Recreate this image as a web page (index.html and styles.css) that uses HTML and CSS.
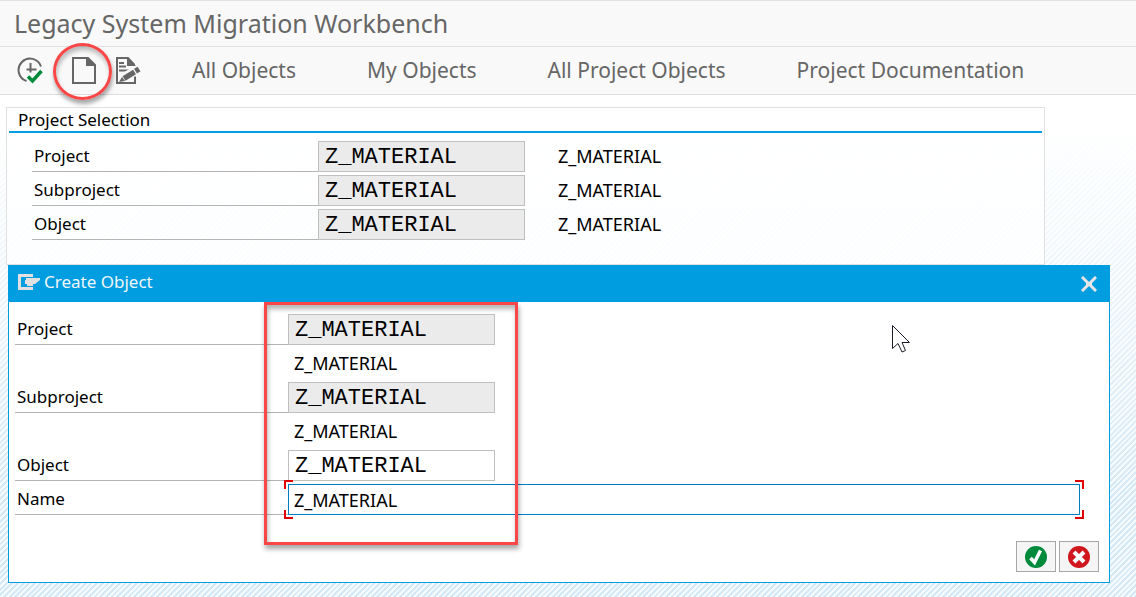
FILE: index.html
```html
<!DOCTYPE html>
<html lang="en">
<head>
<meta charset="utf-8">
<meta name="viewport" content="width=device-width, initial-scale=1">
<title>Legacy System Migration Workbench</title>
<link rel="stylesheet" href="styles.css">
</head>
<body>
<header class="titlebar"><h1>Legacy System Migration Workbench</h1></header>
<nav class="toolbar" aria-label="Application toolbar">
  <div class="tools">
    <button type="button" class="tool" aria-label="Execute">
      <svg width="28" height="28" viewBox="0 0 28 28" fill="none"><path d="M10.500 24A11.500 11.500 0 1 1 25 9.500" stroke="#666" stroke-width="2"/><path d="M14.500 6v9.500M10.500 12.500h10" stroke="#666" stroke-width="2"/><path d="M12 19.500l4.500 4.500 9-10" stroke="#008a3b" stroke-width="3.500"/></svg>
    </button>
    <button type="button" class="tool tool-create" aria-label="Create">
      <svg width="28" height="28" viewBox="0 0 28 28"><path d="M3 1h15l7 7v18H3z" fill="#f9f9f9" stroke="#666" stroke-width="2"/><path d="M16 1h2l8 8h-10z" fill="#666"/></svg>
      <span class="ring"></span>
    </button>
    <button type="button" class="tool" aria-label="Change">
      <svg width="28" height="28" viewBox="0 0 28 28" fill="none"><path d="M21 19.500V26H3V1h11l6.500 7" stroke="#666" stroke-width="2"/><path d="M13 0l9 9h-9z" fill="#666"/><path d="M5 6h5M5 9.500h7M5 13.500h11" stroke="#666" stroke-width="2"/><path d="M9 21L22 13" stroke="#f9f9f9" stroke-width="9"/><path d="M10 21.500L20.500 15" stroke="#666" stroke-width="5.500"/><path d="M21.500 14.200l3.500-2.200" stroke="#666" stroke-width="5.500"/><path d="M5 25l3-5 3 4z" fill="#666"/></svg>
    </button>
  </div>
  <div class="links">
    <button type="button">All Objects</button>
    <button type="button">My Objects</button>
    <button type="button">All Project Objects</button>
    <button type="button">Project Documentation</button>
  </div>
</nav>
<main>
  <section class="panel">
    <h2>Project Selection</h2>
    <div class="rows">
      <div class="row"><label for="p1">Project</label><input id="p1" value="Z_MATERIAL" readonly><span>Z_MATERIAL</span></div>
      <div class="row"><label for="p2">Subproject</label><input id="p2" value="Z_MATERIAL" readonly><span>Z_MATERIAL</span></div>
      <div class="row"><label for="p3">Object</label><input id="p3" value="Z_MATERIAL" readonly><span>Z_MATERIAL</span></div>
    </div>
  </section>
  <section class="dialog" role="dialog" aria-labelledby="dialog-title">
    <div class="dialog-head">
      <svg width="24" height="18" viewBox="0 0 24 18"><path d="M0 1h15v3H3v10h12v3H0z" fill="#e1e1e1"/><path d="M8 5h14v2l-5 4h-2v2h-6v-2H7V7h1z" fill="#e1e1e1"/></svg>
      <h2 id="dialog-title">Create Object</h2>
      <button type="button" class="close" aria-label="Close"><svg width="16" height="16" viewBox="0 0 16 16"><path d="M2 2l12 12M14 2L2 14" stroke="#e6e6e6" stroke-width="3" stroke-linecap="square"/><path d="M5 6h6v4H5z" fill="#e6e6e6"/></svg></button>
    </div>
    <form class="dialog-body">
      <div class="row"><label for="d1">Project</label><input id="d1" value="Z_MATERIAL" readonly></div>
      <p class="value">Z_MATERIAL</p>
      <div class="row"><label for="d2">Subproject</label><input id="d2" value="Z_MATERIAL" readonly></div>
      <p class="value">Z_MATERIAL</p>
      <div class="row"><label for="d3">Object</label><input id="d3" value="Z_MATERIAL"></div>
      <div class="row"><label for="d4">Name</label><div class="focus"><input id="d4" class="name" value="Z_MATERIAL"><i class="tl"></i><i class="tr"></i><i class="bl"></i><i class="br"></i></div></div>
      <div class="actions">
        <button type="button" aria-label="Continue"><svg width="22" height="22" viewBox="0 0 22 22"><circle cx="11" cy="11" r="11" fill="#008a3b"/><path d="M5.500 12l4 4.500 6-12" fill="none" stroke="#fff" stroke-width="3.500"/></svg></button>
        <button type="button" aria-label="Cancel"><svg width="22" height="22" viewBox="0 0 22 22"><circle cx="11" cy="11" r="11" fill="#cf171d"/><path d="M6 6l10 10M16 6L6 16" stroke="#fff" stroke-width="4"/></svg></button>
      </div>
    </form>
    <span class="frame"></span>
    <svg class="cursor" width="20" height="30" viewBox="0 0 20 30"><path d="M.5.500v23l5.500-5 4 8.500 3.500-1.500-3.500-8h7.500z" fill="#fff" stroke="#1c1c28"/></svg>
  </section>
</main>
</body>
</html>
```
FILE: styles.css
```css
* { box-sizing: border-box; }
html { min-height: 100%; }
body {
  margin: 0;
  min-height: 100vh;
  font: 17px/30px "Noto Sans", "Open Sans", sans-serif;
  color: #000;
  background:
    linear-gradient(180deg, #fff 20%, rgba(255, 255, 255, 0) 85%),
    repeating-linear-gradient(135deg, #d5e8f5 0 2px, #f4fafd 2px 4px);
}
h1, h2, p { margin: 0; font-weight: normal; font-size: inherit; }
button { font: inherit; color: inherit; padding: 0; border: 0; background: none; }
svg { display: block; }

.titlebar {
  height: 47px;
  padding-left: 14px;
  border-top: 1px solid #e2e2e2;
  border-bottom: 1px solid #e0e0e0;
  background: #f9f9f9;
  color: #666;
}
.titlebar h1 { font-size: 25px; line-height: 45px; }
.toolbar {
  display: flex;
  align-items: center;
  height: 48px;
  padding-left: 16px;
  border-bottom: 1px solid #dedede;
  background: #f9f9f9;
  color: #666;
}
.tools { display: flex; width: 176px; }
.tool { width: 28px; }
.tool-create { position: relative; margin: 0 16px 0 26px; }
.ring {
  position: absolute;
  inset: -14px -14px -15px -17px;
  border: 3px solid #f94747;
  border-radius: 50%;
  box-shadow: 1px 4px 4px rgba(0, 0, 0, .35), inset 1px 4px 4px rgba(0, 0, 0, .25);
}
.links {
  display: flex;
  gap: 71px;
  padding-bottom: 2px;
  font-size: 21px;
  white-space: nowrap;
}

main { padding: 12px 26px 14px 6px; }
.panel {
  height: 158px;
  margin-right: 65px;
  padding: 0 2px;
  border: 1px solid #e0e0e0;
  background: rgba(255, 255, 255, .7);
}
.panel h2 {
  height: 25px;
  padding-left: 9px;
  line-height: 24px;
  border-bottom: 2px solid #009de0;
}
.rows { padding: 8px 0 0 23px; }
.row { display: flex; height: 31px; margin-bottom: 3px; }
.row label {
  width: 286px;
  flex: none;
  padding-left: 2px;
  border-bottom: 1px solid #b5b5b5;
}
.row input {
  width: 207px;
  height: 31px;
  padding: 2px 6px 0;
  border: 1px solid #bfbfbf;
  border-radius: 0;
  outline: 0;
  background: #fff;
  color: #000;
  font: 22px "Liberation Mono", monospace;
}
.row input:read-only { background: #ebebeb; }
.row span { margin-left: 33px; font-size: 18px; }

.dialog {
  position: relative;
  margin-left: 2px;
  border: 1px solid #009de0;
  background: #fff;
}
.dialog-head {
  display: flex;
  height: 36px;
  padding: 0 12px 0 9px;
  background: #009de0;
  color: #f0f6fa;
}
.dialog-head > svg { margin-top: 7px; }
.dialog-head h2 { margin-left: 2px; line-height: 32px; }
.close { margin-left: auto; }
.dialog-body { padding: 12px 10px 10px 6px; }
.dialog-body label { width: 273px; }
.value { height: 31px; margin: 0 0 3px 279px; font-size: 18px; }
.focus { position: relative; flex: 1; margin-right: 19px; }
.row .name {
  width: 100%;
  padding: 0 5px;
  border-color: #007cc0;
  font: 18px "Noto Sans", "Open Sans", sans-serif;
}
.focus i { position: absolute; width: 9px; height: 9px; border: 0 solid #e00000; }
.tl { left: -4px; top: -4px; }
.tr { right: -4px; top: -4px; }
.bl { left: -4px; bottom: -4px; }
.br { right: -4px; bottom: -4px; }
.focus .tl { border-width: 2px 0 0 2px; }
.focus .tr { border-width: 2px 2px 0 0; }
.focus .bl { border-width: 0 0 2px 2px; }
.focus .br { border-width: 0 2px 2px 0; }
.actions { display: flex; justify-content: flex-end; gap: 3px; padding-top: 23px; }
.actions button {
  display: grid;
  place-items: center;
  width: 40px;
  height: 31px;
  border: 1px solid #a6a6a6;
  background: #f5f5f5;
}
.frame {
  position: absolute;
  left: 255px;
  top: 36px;
  width: 254px;
  height: 243px;
  border: 3px solid #f94747;
  box-shadow: 1px 4px 5px rgba(0, 0, 0, .35), inset 1px 4px 5px rgba(0, 0, 0, .3);
  pointer-events: none;
}
.cursor { position: absolute; left: 883px; top: 59px; }
```
